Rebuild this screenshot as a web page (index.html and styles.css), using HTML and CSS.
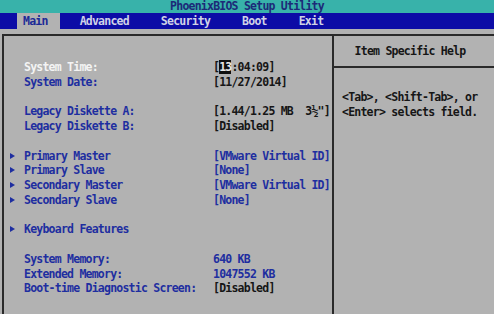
FILE: index.html
```html
<!DOCTYPE html>
<html lang="en">
<head>
    <meta charset="UTF-8">
    <title>PhoenixBIOS Setup Utility</title>
    <link rel="stylesheet" href="styles.css">
</head>
<body>
    <div class="title-bar">PhoenixBIOS Setup Utility</div>

    <div class="menu-bar">
        <span class="tab active">Main</span>
        <span class="tab">Advanced</span>
        <span class="tab">Security</span>
        <span class="tab">Boot</span>
        <span class="tab">Exit</span>
    </div>

    <div class="screen">
        <div class="panel">
            <div class="settings">
                <div class="group">
                    <div class="row selected">
                        <span class="label">System Time:</span>
                        <span class="value">[<span class="cursor">13</span>:04:09]</span>
                    </div>
                    <div class="row">
                        <span class="label">System Date:</span>
                        <span class="value">[11/27/2014]</span>
                    </div>
                </div>

                <div class="group">
                    <div class="row">
                        <span class="label">Legacy Diskette A:</span>
                        <span class="value">[1.44/1.25 MB  3½"]</span>
                    </div>
                    <div class="row">
                        <span class="label">Legacy Diskette B:</span>
                        <span class="value">[Disabled]</span>
                    </div>
                </div>

                <div class="group">
                    <div class="row">
                        <span class="label"><i class="arrow"></i>Primary Master</span>
                        <span class="value link">[VMware Virtual ID]</span>
                    </div>
                    <div class="row">
                        <span class="label"><i class="arrow"></i>Primary Slave</span>
                        <span class="value link">[None]</span>
                    </div>
                    <div class="row">
                        <span class="label"><i class="arrow"></i>Secondary Master</span>
                        <span class="value link">[VMware Virtual ID]</span>
                    </div>
                    <div class="row">
                        <span class="label"><i class="arrow"></i>Secondary Slave</span>
                        <span class="value link">[None]</span>
                    </div>
                </div>

                <div class="group">
                    <div class="row">
                        <span class="label"><i class="arrow"></i>Keyboard Features</span>
                    </div>
                </div>

                <div class="group">
                    <div class="row">
                        <span class="label">System Memory:</span>
                        <span class="value link">640 KB</span>
                    </div>
                    <div class="row">
                        <span class="label">Extended Memory:</span>
                        <span class="value link">1047552 KB</span>
                    </div>
                    <div class="row">
                        <span class="label">Boot-time Diagnostic Screen:</span>
                        <span class="value">[Disabled]</span>
                    </div>
                </div>
            </div>

            <div class="help">
                <div class="help-header">Item Specific Help</div>
                <div class="help-body">
                    &lt;Tab&gt;, &lt;Shift-Tab&gt;, or<br>
                    &lt;Enter&gt; selects field.
                </div>
            </div>
        </div>
    </div>
</body>
</html>
```

FILE: styles.css
```css
html, body {
    height: 100%;
}

body {
    margin: 0;
    display: flex;
    flex-direction: column;
    overflow: hidden;
    background-color: #b2b2b2;
    font-family: 'DejaVu Sans Mono', 'Liberation Mono', monospace;
    font-weight: bold;
    font-size: 11.5px;
    letter-spacing: -0.77px;
    color: #161616;
}

.title-bar {
    height: 13px;
    line-height: 13px;
    text-align: center;
    background-color: #38b2aa;
    color: #1c2a78;
}

.menu-bar {
    display: flex;
    height: 16px;
    padding-left: 7px;
    background-color: #0c0ca6;
}

.tab {
    margin: 0 10px;
    padding: 0 6px;
    line-height: 17px;
    color: #d0d2e6;
}

.tab.active {
    padding-right: 12px;
    margin-right: 4px;
    height: 18px;
    background-color: #b2b2b2;
    color: #1c2a96;
}

.screen {
    flex: 1;
    display: flex;
    padding: 5px 0 0 2px;
}

.panel {
    flex: 1;
    display: grid;
    grid-template-columns: 330px 1fr;
    border-top: 2px solid #2a2a2a;
    border-left: 2px solid #2a2a2a;
}

.settings {
    padding: 24px 0 0 20px;
    border-right: 2px solid #2a2a2a;
}

.group {
    margin-bottom: 14.75px;
}

.row {
    display: grid;
    grid-template-columns: 189px 1fr;
    line-height: 14.75px;
    white-space: pre;
}

.label {
    color: #1e2ea0;
}

.row.selected .label {
    color: #f4f4f4;
}

.value.link {
    color: #1e2ea0;
}

.cursor {
    background-color: #101010;
    color: #e8e8e8;
}

.arrow {
    display: inline-block;
    width: 0;
    height: 0;
    margin: 0 9px 0 -14px;
    border-left: 5px solid #1e2ea0;
    border-top: 3.5px solid transparent;
    border-bottom: 3.5px solid transparent;
    vertical-align: 1px;
}

.help-header {
    height: 30px;
    line-height: 30px;
    text-align: center;
    padding-right: 8px;
    border-bottom: 2px solid #2a2a2a;
}

.help-body {
    padding: 22px 0 0 8px;
    line-height: 14.75px;
}
```
